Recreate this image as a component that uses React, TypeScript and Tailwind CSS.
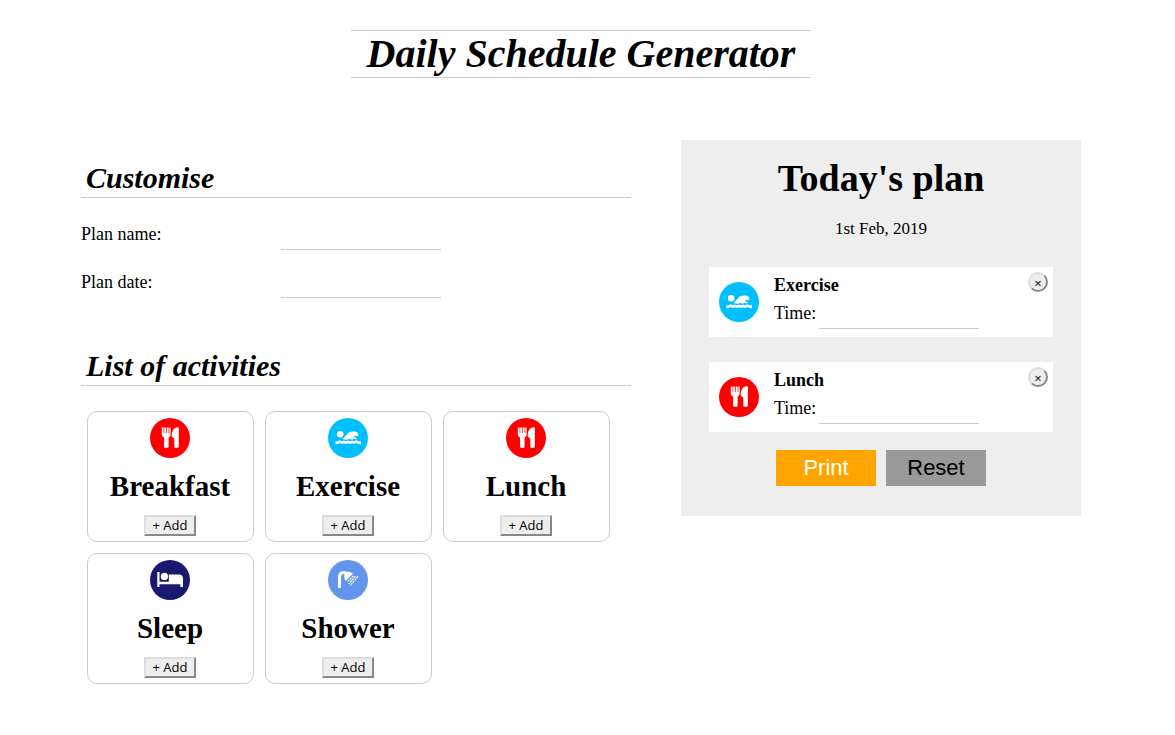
import { useState } from "react";

type Kind = "meal" | "swim" | "sleep" | "shower";
type Activity = { name: string; kind: Kind };

const activities: Activity[] = [
  { name: "Breakfast", kind: "meal" },
  { name: "Exercise", kind: "swim" },
  { name: "Lunch", kind: "meal" },
  { name: "Sleep", kind: "sleep" },
  { name: "Shower", kind: "shower" },
];

const discs: Record<Kind, string> = {
  meal: "#ff0000",
  swim: "#00bfff",
  sleep: "#191970",
  shower: "#6495ed",
};

function ActivityIcon({ kind }: { kind: Kind }) {
  return (
    <svg viewBox="0 0 40 40" className="size-10 shrink-0" aria-hidden="true">
      <circle cx="20" cy="20" r="20" fill={discs[kind]} />
      {kind === "meal" && (
        <g fill="#fff">
          <path d="M11.8 9.400h1.800v5.600h.7V9.400h1.800v5.600h.7V9.400h1.800v5.600h.7V9.400h1.300v6.800c0 1.700-.8 2.700-2 3.300v8.700c0 1-.5 1.600-1.200 1.600h-2.100c-.7 0-1.200-.6-1.200-1.600v-8.700c-1.500-.6-2.300-1.600-2.300-3.300z" />
          <path d="M28.800 10v18.300c0 1-.5 1.500-1.200 1.500h-2.100c-.7 0-1.200-.5-1.200-1.500v-7.700l-2.500-1.800c-.4-4.700 1.500-8.800 5.200-9.500 1.200-.2 1.800 0 1.800.7z" />
        </g>
      )}
      {kind === "swim" && (
        <g fill="#fff">
          <circle cx="12.200" cy="16.300" r="3.300" />
          <path d="M14.600 20.900l5.100-5.400c.9-1.100 2-1.700 3.300-1.800l3.800-.2c2.100 0 3.500 1.500 3.600 3.200 0 1-.6 1.500-1.400 1.500-1.500-.1-2.500-.6-3.700-.5l3.900 3.300c-1.200.7-2.200.5-3.300-.3-1.600 1.200-3.100 1.200-4.700 0-2 1.200-4.400 1.400-6.600.2z" />
          <path d="M7.400 23.600q2.200 0 4.200-1.300 2.100 1.400 4.200.1 2.100 1.300 4.200 0 2.100 1.300 4.200 0 2.100 1.300 4.200-.1 2 1.300 4.600 1.300v2.700q-2.600 0-4.600-1.200-2.100 1.300-4.200.1-2.100 1.300-4.200 0-2.100 1.300-4.200 0-2.100 1.300-4.200-.1-2 1.200-4.200 1.200z" />
        </g>
      )}
      {kind === "sleep" && (
        <g fill="#fff">
          <path d="M7.300 12h2.200v9.700h9.300V14.500H29c2.500 0 4 1.600 4 4v8.500h-2.600v-2.800H9.500V27H7.300z" />
          <circle cx="14.400" cy="16.400" r="3.600" />
        </g>
      )}
      {kind === "shower" && (
        <g fill="none" stroke="#fff">
          <path d="M11.500 28V17.200c0-3 1.500-4.700 4.300-4.700 1.500 0 2.500.4 3.500 1.200" strokeWidth="3" />
          <path d="M17 12.800c1.900-1.700 5.200-1.300 7.900.9L17.500 21c-1.500-2.600-1.700-6-.5-8.200z" fill="#fff" stroke="none" />
          <path d="M25.500 15.800L19.300 22M27.500 16.400l-6.800 7.400M30 16.400l-8 9.400" strokeWidth="1.200" strokeDasharray="2.200 .7" />
        </g>
      )}
    </svg>
  );
}

function SectionHeading({ children }: { children: string }) {
  return (
    <h2 className="border-b border-[#ccc] px-[5px] pt-px pb-[3px] text-[30px] leading-8 font-bold italic">
      {children}
    </h2>
  );
}

function Field({ id, label }: { id: string; label: string }) {
  return (
    <div className="flex h-8 items-start">
      <label htmlFor={id} className="w-[200px] leading-8">
        {label}
      </label>
      <input id={id} className="h-8 w-40 border-b border-[#ccc] bg-transparent outline-none" />
    </div>
  );
}

export default function App() {
  const [plan, setPlan] = useState<Activity[]>([activities[1], activities[2]]);

  return (
    <div className="bg-white px-4 pt-[30px] pb-10 font-['Liberation_Serif',serif] text-[18px] text-black lg:pr-[13px] lg:pl-0">
      <h1 className="mx-auto w-fit border-y border-[#ccc] px-4 text-center text-[40px] leading-[46px] font-bold italic">
        Daily Schedule Generator
      </h1>

      <main className="mx-auto mt-[62px] flex max-w-[1000px] flex-col gap-[50px] lg:flex-row lg:items-start">
        <div className="min-w-0 flex-1 pt-[21px]">
          <section>
            <SectionHeading>Customise</SectionHeading>
            <div className="mt-5 flex flex-col gap-4">
              <Field id="plan-name" label="Plan name:" />
              <Field id="plan-date" label="Plan date:" />
            </div>
          </section>

          <section className="mt-[51px]">
            <SectionHeading>List of activities</SectionHeading>
            <ul className="mt-[25px] flex flex-wrap gap-[11px] pl-[6px]">
              {activities.map((activity) => (
                <li
                  key={activity.name}
                  className="flex w-[167px] flex-col items-center rounded-[10px] border border-[#ccc] pt-[6px] pr-px pb-[5px]"
                >
                  <ActivityIcon kind={activity.kind} />
                  <h3 className="mt-3 text-[29px] leading-8 font-bold">{activity.name}</h3>
                  <button
                    type="button"
                    onClick={() => setPlan([...plan, activity])}
                    className="mt-[13px] h-[21px] w-[52px] border-2 border-t-[#ddd] border-r-[#888] border-b-[#888] border-l-[#ddd] bg-[#eee] pb-px font-['Open_Sans',sans-serif] text-[13px] leading-4"
                  >
                    + Add
                  </button>
                </li>
              ))}
            </ul>
          </section>
        </div>

        <aside className="w-full bg-[#eee] px-7 pt-[18px] pb-[30px] lg:w-[400px]">
          <h2 className="text-center text-[38px] leading-10 font-bold">Today's plan</h2>
          <p className="mt-[19px] text-center text-[17px] leading-6">1st Feb, 2019</p>
          <ul className="mt-[26px] flex flex-col gap-[25px]">
            {plan.map((item, index) => (
              <li key={index} className="relative flex h-[70px] items-center bg-white pl-[10px]">
                <ActivityIcon kind={item.kind} />
                <div className="ml-[15px] self-start pt-1">
                  <h3 className="leading-7 font-bold">{item.name}</h3>
                  <div className="flex items-start gap-[3px]">
                    <label htmlFor={`time-${index}`} className="leading-7">
                      Time:
                    </label>
                    <input
                      id={`time-${index}`}
                      className="h-[30px] w-40 border-b border-[#ccc] bg-transparent outline-none"
                    />
                  </div>
                </div>
                <button
                  type="button"
                  aria-label={`Remove ${item.name}`}
                  onClick={() => setPlan(plan.filter((_, i) => i !== index))}
                  className="absolute top-[5px] right-[5px] flex size-5 items-center justify-center rounded-full border-2 border-t-[#ddd] border-r-[#888] border-b-[#888] border-l-[#ddd] bg-[#eee] pt-[2px] font-['Open_Sans',sans-serif] text-[13px] leading-3"
                >
                  ×
                </button>
              </li>
            ))}
          </ul>
          <div className="mt-[18px] flex justify-center gap-[10px] font-['Liberation_Sans',sans-serif] text-[22px] leading-9">
            <button type="button" onClick={() => window.print()} className="h-9 w-[100px] bg-[#ffa500] text-white">
              Print
            </button>
            <button type="button" onClick={() => setPlan([])} className="h-9 w-[100px] bg-[#999]">
              Reset
            </button>
          </div>
        </aside>
      </main>
    </div>
  );
}
